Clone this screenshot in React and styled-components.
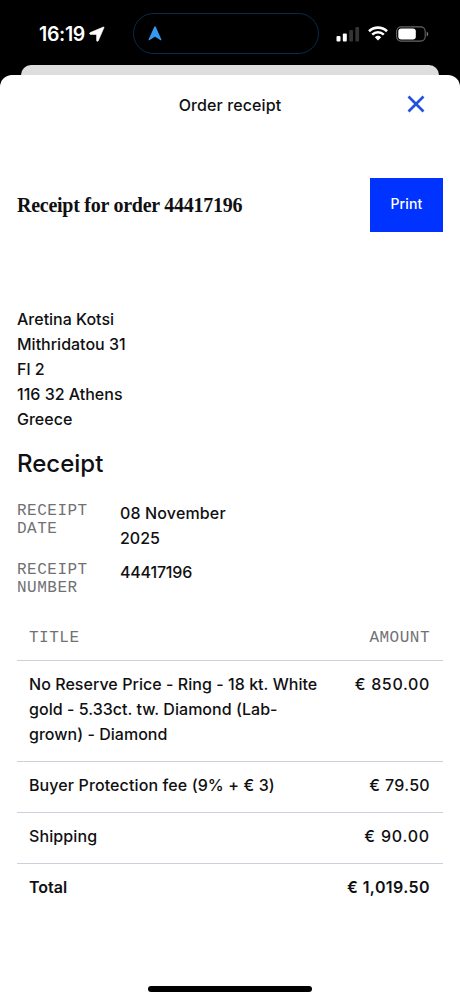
import React from "react";
import styled, { createGlobalStyle } from "styled-components";

const GlobalStyle = createGlobalStyle`
  * {
    box-sizing: border-box;
  }
  body {
    margin: 0;
    background-color: #000;
    font-family: Inter, "Liberation Sans", sans-serif;
    color: #101012;
  }
`;

const Phone = styled.div`
  display: flex;
  flex-direction: column;
  width: 460px;
  height: 1000px;
  overflow: hidden;
  background-color: #000;
`;

const StatusBar = styled.div`
  display: flex;
  align-items: flex-start;
  height: 65px;
  padding: 13px 31px 0 39px;
`;

const Clock = styled.div`
  display: flex;
  align-items: center;
  gap: 4px;
  width: 94px;
  height: 42px;
  color: #fff;
  font-size: 19.5px;
  font-weight: 600;
  letter-spacing: -0.35px;
`;

const Island = styled.div`
  display: flex;
  align-items: center;
  width: 186px;
  height: 41px;
  padding-left: 14px;
  border: 1px solid #0b2a50;
  border-radius: 21px;
`;

const StatusIcons = styled.div`
  display: flex;
  align-items: center;
  gap: 8px;
  height: 41px;
  margin-left: auto;
`;

const BackSheet = styled.div`
  height: 10px;
  margin: 0 21px;
  border-radius: 10px 10px 0 0;
  background-color: #dedede;
`;

const Sheet = styled.div`
  display: flex;
  flex-direction: column;
  flex: 1;
  border-radius: 12px 12px 0 0;
  background-color: #fff;
`;

const SheetHeader = styled.div`
  display: grid;
  grid-template-columns: 60px 1fr 60px;
  align-items: center;
  height: 60px;
  padding: 0 14px;
`;

const SheetTitle = styled.div`
  grid-column: 2;
  text-align: center;
  font-size: 16px;
  font-weight: 450;
  letter-spacing: 0.1px;
`;

const CloseButton = styled.button`
  display: flex;
  justify-content: center;
  padding: 0 0 2px;
  border: none;
  background: none;
  cursor: pointer;
`;

const Content = styled.div`
  flex: 1;
  padding: 43px 17px 0;
`;

const OrderRow = styled.div`
  display: flex;
  align-items: center;
  justify-content: space-between;
  height: 54px;
`;

const OrderTitle = styled.h1`
  margin: 0;
  font-family: "Liberation Serif", serif;
  font-size: 20px;
  font-weight: 700;
  letter-spacing: -0.26px;
`;

const PrintButton = styled.button`
  width: 73px;
  height: 54px;
  padding: 0 0 3px;
  border: none;
  background-color: #0033ff;
  color: #fff;
  font-family: inherit;
  font-size: 14px;
  font-weight: 450;
  letter-spacing: 0.15px;
`;

const Text = styled.span`
  display: block;
  font-size: 16px;
  font-weight: ${({ $bold }) => ($bold ? 600 : 450)};
  line-height: 25px;
  letter-spacing: ${({ $spacing }) => $spacing || 0}px;
  white-space: nowrap;
`;

const Address = styled.address`
  margin-top: 75px;
  font-style: normal;
`;

const Heading = styled.h2`
  margin: 17px 0 22px;
  font-size: 24px;
  font-weight: 450;
  line-height: 30px;
`;

const Label = styled.span`
  font-family: "Liberation Mono", monospace;
  font-size: 16px;
  line-height: 18px;
  letter-spacing: 0.5px;
  text-transform: uppercase;
  color: #717174;
`;

const Details = styled.dl`
  display: grid;
  grid-template-columns: 103px 125px;
  row-gap: 9px;
  margin: 0 0 19px;
  dt {
    display: flex;
    width: 80px;
    padding-top: 1px;
  }
  dd {
    margin: 0;
  }
`;

const TableRow = styled.div`
  display: flex;
  justify-content: space-between;
  padding: ${({ $head }) => ($head ? "13px 13px 13px 12px" : "11px 13px 14px 12px")};
  border-bottom: ${({ $last }) => ($last ? "none" : "1px solid #cfd0dc")};
`;

const HomeIndicator = styled.div`
  width: 164px;
  height: 6px;
  margin: 0 auto 8px;
  border-radius: 3px;
  background-color: #000;
`;

const address = ["Aretina Kotsi", "Mithridatou 31", "Fl 2", "116 32 Athens", "Greece"];

const rows = [
  {
    lines: [
      { text: "No Reserve Price - Ring - 18 kt. White", spacing: 0.05 },
      { text: "gold - 5.33ct. tw. Diamond (Lab-", spacing: 0.03 },
      { text: "grown) - Diamond", spacing: 0.03 },
    ],
    amount: { text: "€ 850.00", spacing: 0.65 },
  },
  {
    lines: [{ text: "Buyer Protection fee (9% + € 3)", spacing: 0.11 }],
    amount: { text: "€ 79.50", spacing: 0.3 },
  },
  {
    lines: [{ text: "Shipping", spacing: 0.12 }],
    amount: { text: "€ 90.00", spacing: 0.8 },
  },
  {
    lines: [{ text: "Total", spacing: 0 }],
    amount: { text: "€ 1,019.50", spacing: 0.4 },
    total: true,
  },
];

function SignalIcon() {
  return (
    <svg width="24" height="16" viewBox="0 0 24 16">
      <rect x="0.5" y="10" width="4" height="5.5" rx="1" fill="#fff" />
      <rect x="6.8" y="7.5" width="4" height="8" rx="1" fill="#fff" />
      <rect x="13.2" y="4" width="3.8" height="11.5" rx="1" fill="#343434" />
      <rect x="19.3" y="1" width="3.8" height="14.5" rx="1" fill="#343434" />
    </svg>
  );
}

function WifiIcon() {
  return (
    <svg width="20" height="15" viewBox="0 0 20 15">
      <g fill="none" stroke="#fff" strokeWidth="2.6">
        <path d="M1 5.2a13 13 0 0 1 18 0" />
        <path d="M4.2 8.6a8.4 8.4 0 0 1 11.6 0" />
      </g>
      <path d="M10 14.6l-3.2-3.3a4.7 4.7 0 0 1 6.4 0z" fill="#fff" />
    </svg>
  );
}

function BatteryIcon() {
  return (
    <svg width="33" height="16" viewBox="0 0 33 16">
      <rect x="0.6" y="0.9" width="28.6" height="14.2" rx="4.5" fill="none" stroke="#666" strokeWidth="1.1" />
      <rect x="2.3" y="2.6" width="17.5" height="10.8" rx="3" fill="#fff" />
      <path d="M30.7 5.5c2 .8 2 4.2 0 5z" fill="#777" />
    </svg>
  );
}

function App() {
  return (
    <>
      <GlobalStyle />
      <Phone>
        <StatusBar>
          <Clock>
            16:19
            <svg width="16" height="16" viewBox="0 0 16 16">
              <path
                d="M14.4 1L1.2 6.6c-1 .4-.8 1.8.3 1.8h5.6c.3 0 .5.2.5.5v5.5c0 1.1 1.3 1.3 1.7.3L15 1.6c.2-.5-.1-.8-.6-.6z"
                fill="#fff"
                stroke="#fff"
                strokeWidth="0.6"
              />
            </svg>
          </Clock>
          <Island>
            <svg width="14" height="15" viewBox="0 0 14 15">
              <path
                d="M6.2.9L.7 13.2c-.3.9.3 1.4 1.1.9L6.4 11q.6-.4 1.2 0l4.6 3.1c.8.5 1.4 0 1.1-.9L7.8.9C7.5.1 6.5.1 6.2.9z"
                fill="#3599f2"
              />
            </svg>
          </Island>
          <StatusIcons>
            <SignalIcon />
            <WifiIcon />
            <BatteryIcon />
          </StatusIcons>
        </StatusBar>
        <BackSheet />
        <Sheet>
          <SheetHeader>
            <SheetTitle>Order receipt</SheetTitle>
            <CloseButton aria-label="Close">
              <svg width="18" height="18" viewBox="0 0 18 18">
                <path d="M1.5 1.5l15 15M16.5 1.5l-15 15" stroke="#2450e0" strokeWidth="2.7" />
              </svg>
            </CloseButton>
          </SheetHeader>
          <Content>
            <OrderRow>
              <OrderTitle>Receipt for order 44417196</OrderTitle>
              <PrintButton>Print</PrintButton>
            </OrderRow>
            <Address>
              {address.map((line) => (
                <Text key={line}>{line}</Text>
              ))}
            </Address>
            <Heading>Receipt</Heading>
            <Details>
              <dt>
                <Label>Receipt date</Label>
              </dt>
              <dd>
                <Text $spacing={0.15}>08 November</Text>
                <Text>2025</Text>
              </dd>
              <dt>
                <Label>Receipt number</Label>
              </dt>
              <dd>
                <Text $spacing={-0.2}>44417196</Text>
              </dd>
            </Details>
            <TableRow $head>
              <Label>Title</Label>
              <Label>Amount</Label>
            </TableRow>
            {rows.map((row) => (
              <TableRow key={row.amount.text} $last={row.total}>
                <div>
                  {row.lines.map((line) => (
                    <Text key={line.text} $bold={row.total} $spacing={line.spacing}>
                      {line.text}
                    </Text>
                  ))}
                </div>
                <Text $bold={row.total} $spacing={row.amount.spacing}>
                  {row.amount.text}
                </Text>
              </TableRow>
            ))}
          </Content>
          <HomeIndicator />
        </Sheet>
      </Phone>
    </>
  );
}

export default App;
